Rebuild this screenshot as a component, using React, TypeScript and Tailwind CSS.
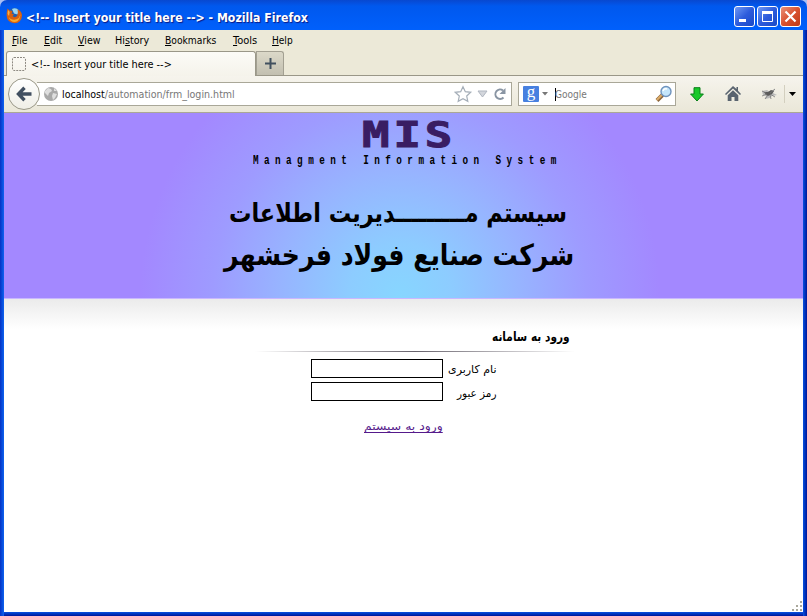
import { useLayoutEffect, useRef, useState, type ReactNode } from "react";

// Renders a run of text condensed or stretched to an exact width.
function Fit({ w, className = "", inner = "", rtl = false, children }: { w: number; className?: string; inner?: string; rtl?: boolean; children: ReactNode }) {
  const ref = useRef<HTMLSpanElement>(null);
  const [scale, setScale] = useState(1);
  useLayoutEffect(() => {
    if (ref.current) setScale(w / ref.current.offsetWidth);
  }, [w]);
  return (
    <span className={`block shrink-0 whitespace-pre text-left ${className}`} style={{ width: w }}>
      <span ref={ref} dir={rtl ? "rtl" : "ltr"} className={`inline-block origin-left ${inner}`} style={{ transform: `scaleX(${scale})` }}>
        {children}
      </span>
    </span>
  );
}

const menus = [
  { key: "F", pre: "", rest: "ile", w: 16, cell: "w-8" },
  { key: "E", pre: "", rest: "dit", w: 18, cell: "w-[34px]" },
  { key: "V", pre: "", rest: "iew", w: 22, cell: "w-[37px]" },
  { key: "s", pre: "Hi", rest: "tory", w: 34, cell: "w-[50px]" },
  { key: "B", pre: "", rest: "ookmarks", w: 51, cell: "w-[68px]" },
  { key: "T", pre: "", rest: "ools", w: 24, cell: "w-[39px]" },
  { key: "H", pre: "", rest: "elp", w: 21, cell: "w-10" },
];

function FirefoxIcon() {
  return (
    <svg width="17" height="17" viewBox="0 0 17 17" className="-mt-[2px] shrink-0">
      <circle cx="8.5" cy="8" r="7" fill="#1f5fae" />
      <path d="M6 2q4-2 7 1.5l-1.5 4-3.5-1z" fill="#9bd6f2" />
      <path d="M1.5 1.5L3.5 3.5Q5 3 6.5 4.5L5.5 6.5 8 7.5 6.5 9Q8 11 10.5 9.5 12.5 7 11.5 2.5 15.8 4 16 8.5 15.5 16 8.5 16.3 1 15.5.6 8.5.6 5 1.5 1.5z" fill="#d9600f" />
      <path d="M14.5 5.5Q14.5 12 8.5 12.8 4.5 13 2.5 9.5 4 15 9 15 14.5 14.5 14.5 5.5z" fill="#f9a92b" />
      <path d="M2 3l1.7 2L3 9 1.6 7z" fill="#f3b04a" />
    </svg>
  );
}

function TitleButton({ kind }: { kind: "min" | "max" | "close" }) {
  const tone = kind === "close" ? "bg-linear-to-br from-[#e89078] via-[#d9512e] to-[#bf3a18]" : "bg-linear-to-br from-[#7198f3] via-[#2d5bdc] to-[#1949c6]";
  return (
    <div className={`flex h-[21px] w-[21px] items-center justify-center rounded-[3px] border border-white ${tone}`}>
      <svg width="19" height="19" viewBox="0 0 19 19" fill="none" stroke="#fff">
        {kind === "min" && <path d="M4 13.5h7" strokeWidth="3" />}
        {kind === "max" && <path d="M4.5 5v9.5h10V5" strokeWidth="1" />}
        {kind === "max" && <path d="M4 5.5h11" strokeWidth="3" />}
        {kind === "close" && <path d="M4.5 4.5l10 10M14.5 4.5l-10 10" strokeWidth="2.2" />}
      </svg>
    </div>
  );
}

function TitleBar() {
  return (
    <header className="flex h-[30px] shrink-0 items-center rounded-t-[7px] bg-linear-to-b from-[#0848d0] via-[#0058ee] via-20% to-[#0060fc] pl-[6px] pr-[6px] pt-[2px]">
      <FirefoxIcon />
      <Fit w={282} className="ml-[3px] mt-[3px] text-[12.5px] leading-4 font-bold text-white [text-shadow:1px_1px_1px_#0a1883]">
        {"<!-- Insert your title here --> - Mozilla Firefox"}
      </Fit>
      <div className="ml-auto flex gap-[2px] pt-[1px]">
        <TitleButton kind="min" />
        <TitleButton kind="max" />
        <TitleButton kind="close" />
      </div>
    </header>
  );
}

function MenuBar() {
  return (
    <nav className="flex h-[21px] shrink-0 items-center bg-[#ece9d8] pl-2 text-[11px] leading-[14px] text-black">
      {menus.map((m) => (
        <div key={m.key} className={m.cell}>
          <Fit w={m.w}>
            {m.pre}
            <u className="underline-offset-1">{m.key}</u>
            {m.rest}
          </Fit>
        </div>
      ))}
    </nav>
  );
}

function TabStrip() {
  return (
    <div className="flex h-[25px] shrink-0 items-end border-b border-[#9a9788] bg-[#ece9d8] pl-[2px]">
      <div className="-mb-px flex h-[25px] w-[250px] items-center rounded-t-[3px] border border-b-0 border-[#9a9788] bg-linear-to-b from-[#fcfbf7] to-[#f5f3eb] pl-[5px]">
        <svg width="14" height="14" viewBox="0 0 14 14">
          <rect x=".5" y=".5" width="13" height="13" rx="1.5" fill="none" stroke="#8d8981" strokeDasharray="2 1" />
        </svg>
        <Fit w={141} className="ml-[5px] mt-[2px] text-[11px] leading-4 text-black">{"<!-- Insert your title here -->"}</Fit>
      </div>
      <div className="flex h-[24px] w-[28px] items-center justify-center rounded-tr-[3px] border border-b-0 border-[#a3a092] bg-linear-to-b from-[#dcd9c9] to-[#c2bfb0]">
        <svg width="11" height="11" viewBox="0 0 11 11" stroke="#41505f" strokeWidth="2">
          <path d="M5.5 0v11M0 5.5h11" />
        </svg>
      </div>
    </div>
  );
}

function NavBar() {
  return (
    <div className="flex h-[37px] shrink-0 items-center border-b border-[#aaa796] bg-linear-to-b from-[#f6f4ed] to-[#eae7d8]">
      <div className="z-10 ml-[4px] flex h-8 w-8 shrink-0 items-center justify-center rounded-full border border-[#9a9888] bg-linear-to-b from-white to-[#efeee6]">
        <svg width="16" height="16" viewBox="0 0 16 16" fill="none" stroke="#414f60" strokeWidth="3.4" className="-ml-px">
          <path d="M8.5 1.8L2.5 8l6 6.2M3 8h12.5" />
        </svg>
      </div>
      <div className="-ml-[3px] flex h-6 w-[475px] shrink-0 items-center border border-l-0 border-[#a9a798] bg-white pl-[6px]">
        <svg width="16" height="16" viewBox="0 0 16 16">
          <circle cx="8" cy="8" r="7" fill="#a8a8a8" />
          <path d="M2 5l3-3 3 1 1 2-3 2-1 3-3-3zM10 7l4 1-2 4-2 2-1-4zM11 2l3 3-3 0z" fill="#dedede" />
        </svg>
        <Fit w={173} className="ml-[3px] mt-[2px] text-[11px] leading-4 text-[#777]">
          <span className="text-black">localhost</span>/automation/frm_login.html
        </Fit>
        <svg width="54" height="18" viewBox="0 0 54 18" className="ml-auto mr-[3px]" fill="none">
          <path d="M9 1.7l2.3 5 5.4.6-4 3.7 1.1 5.3L9 13.7l-4.8 2.6L5.3 11l-4-3.7 5.4-.6z" stroke="#a5aeb8" strokeWidth="1.2" />
          <path d="M24 6h9l-4.5 6z" fill="#d3d6dc" stroke="#b0b6c0" />
          <path d="M49.5 12.5A4.7 4.7 0 1 1 49 5.5" stroke="#8995a3" strokeWidth="2" />
          <path d="M51.5 3v6h-6z" fill="#8995a3" />
        </svg>
      </div>
      <div className="ml-[6px] flex h-6 w-[158px] shrink-0 items-center border border-[#a9a798] bg-white pl-[4px]">
        <div className="flex h-4 w-4 items-center justify-center rounded-[1px] bg-[#4780e0] font-['Liberation_Serif',serif] text-[17px] leading-3 text-white">
          <span className="-mt-[5px]">g</span>
        </div>
        <svg width="6" height="4" viewBox="0 0 6 4" className="ml-[3px]">
          <path d="M0 0h6L3 3.5z" fill="#777" />
        </svg>
        <div className="ml-[7px] h-[13px] w-px bg-black" />
        <Fit w={32} className="mt-[2px] -ml-px text-[11px] leading-4 text-[#777]">Google</Fit>
        <svg width="18" height="18" viewBox="0 0 18 18" className="ml-auto mr-[2px]">
          <path d="M7.5 10L2 15.5" stroke="#8a643c" strokeWidth="4" />
          <path d="M7 9.8L1.8 15" stroke="#dcac68" strokeWidth="2" />
          <circle cx="11" cy="6.5" r="5" fill="#c5e6fb" stroke="#6f93bd" strokeWidth="1.4" />
          <path d="M8 6q1-3 4-2" stroke="#fff" strokeWidth="1.5" fill="none" />
        </svg>
      </div>
      <svg width="14" height="15" viewBox="0 0 14 15" className="ml-[14px] shrink-0">
        <path d="M4 .7h6v6.3h3.4L7 14 .6 7H4z" fill="#18c929" stroke="#087f18" />
      </svg>
      <svg width="16" height="16" viewBox="0 0 16 16" className="ml-[21px] shrink-0" fill="#59636f">
        <path d="M8 0l3.5 3V1H13v3.7L16 8l-1 1-7-6.5L1 9 0 8z" />
        <path d="M8 4.2l5.3 5V15H9.5v-4h-3v4H2.7V9.2z" />
      </svg>
      <svg width="16" height="15" viewBox="0 0 16 15" className="ml-[20px] shrink-0">
        <path d="M1 4l5-1 3 2 5-3-2 4 4 2-5 1-2 2-5 1 1-3-3-1z" fill="#bbb" />
        <path d="M3 5h4l3-2 3 1-2 3-4 2-2-1z" fill="#5b5b5b" />
        <path d="M1 4l4 2M14 2l-5 4M4 12l3-4M10 12L9 8M14 10L9 7M1 9l5-2" stroke="#777" strokeWidth=".8" />
      </svg>
      <div className="ml-[7px] h-[18px] w-px shrink-0 bg-[#d3cfbf]" />
      <svg width="7" height="4" viewBox="0 0 7 4" className="ml-[4px] shrink-0">
        <path d="M0 0h7L3.5 4z" />
      </svg>
    </div>
  );
}

function Banner() {
  return (
    <section className="flex h-[186px] shrink-0 flex-col border-b border-[#c9b8ff] bg-[radial-gradient(ellipse_260px_270px_at_396px_184px,#87d6ff_0%,#8dccff_20%,#97b4ff_46%,#9e9bff_72%,#a388ff_100%)] font-['DejaVu_Sans',sans-serif] font-bold text-black">
      <Fit w={94} className="ml-[358px] mt-[4px] h-[37px] font-['DejaVu_Sans_Mono',monospace] text-[35px] leading-[37px] tracking-[3px] text-[#391d63] [-webkit-text-stroke:1px_#391d63]">MIS</Fit>
      <Fit w={309} className="ml-[249px] h-[14px] font-['Liberation_Mono',monospace] text-[12px] leading-[14px] tracking-[7px]">Managment Information System</Fit>
      <Fit w={338} rtl className="ml-[225px] mt-[23px] h-[44px] text-[26px] leading-[44px]">سیستم مـــــــــدیریت اطلاعات</Fit>
      <Fit w={350} rtl className="-mt-[2px] ml-[220px] h-[44px] text-[29px] leading-[44px]">شرکت صنایع فولاد فرخشهر</Fit>
    </section>
  );
}

function LoginForm() {
  return (
    <main className="flex min-h-0 flex-1 flex-col bg-linear-to-b from-[#ebebeb] to-white to-[30px] text-[11px] text-black">
      <Fit w={78} rtl className="ml-[488px] mt-[28px] h-5 font-['DejaVu_Sans',sans-serif] text-[13px] leading-5 font-bold">ورود به سامانه</Fit>
      <div className="ml-[251px] mt-[4px] h-px w-[320px] shrink-0 bg-linear-to-r from-transparent via-[#66616b] to-transparent" />
      <div className="ml-[307px] mt-[7px] flex h-[19px] shrink-0 items-center">
        <input aria-label="نام کاربری" className="h-[19px] w-[132px] border border-black bg-white outline-none" />
        <Fit w={49} rtl className="ml-[5px] pt-[3px] leading-4">نام کاربری</Fit>
      </div>
      <div className="ml-[307px] mt-[4px] flex h-[19px] shrink-0 items-center">
        <input aria-label="رمز عبور" type="password" className="h-[19px] w-[132px] border border-black bg-white outline-none" />
        <Fit w={39} rtl className="ml-[14px] pt-[4px] leading-4">رمز عبور</Fit>
      </div>
      <a className="ml-[360px] mt-[18px] block text-[#551a8b]">
        <Fit w={79} rtl className="leading-4" inner="underline decoration-1 underline-offset-[2px] [text-decoration-skip-ink:none]">ورود به سیستم</Fit>
      </a>
      <svg width="11" height="11" viewBox="0 0 11 11" className="mt-auto ml-auto" fill="#aaa89c">
        <path d="M8 0h2v2H8zM4 4h2v2H4zM8 4h2v2H8zM0 8h2v2H0zM4 8h2v2H4zM8 8h2v2H8z" />
      </svg>
    </main>
  );
}

export default function App() {
  return (
    <div className="flex h-[616px] w-[807px] flex-col overflow-hidden bg-[#a9bff5] font-['DejaVu_Sans_Condensed','DejaVu_Sans',sans-serif]">
      <TitleBar />
      <div className="flex min-h-0 flex-1">
        <div className="w-1 shrink-0 bg-linear-to-r from-[#0731c4] to-[#1062f0]" />
        <div className="flex w-[799px] shrink-0 flex-col">
          <MenuBar />
          <TabStrip />
          <NavBar />
          <Banner />
          <LoginForm />
          <div className="h-1 shrink-0 bg-linear-to-b from-[#0b50e0] to-[#00149a]" />
        </div>
        <div className="w-1 shrink-0 bg-linear-to-r from-[#0b50e0] to-[#00149a]" />
      </div>
    </div>
  );
}
